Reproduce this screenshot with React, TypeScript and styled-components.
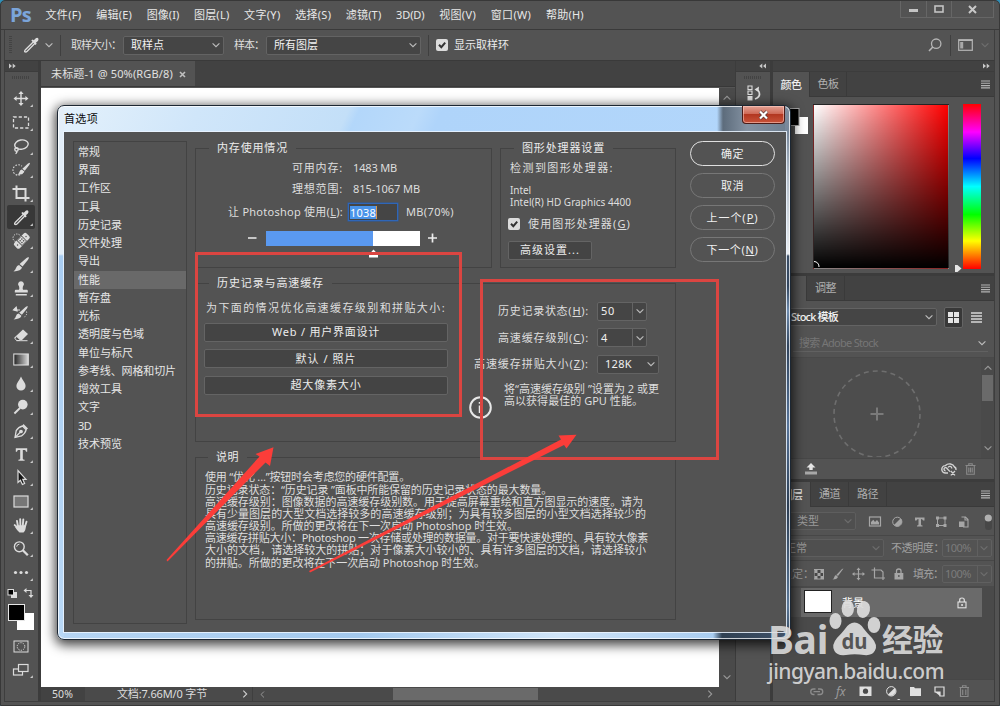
import React, { useLayoutEffect, useRef, useState } from "react";
import styled, { createGlobalStyle, css } from "styled-components";

const GlobalStyle = createGlobalStyle`
  * { box-sizing: border-box; }
  html, body { margin: 0; padding: 0; background: #2f8fb8; overflow: hidden; }
  body {
    font-family: "Noto Sans", "Noto Sans CJK SC", sans-serif;
    font-size: 11px;
    line-height: 14px;
    color: #dedede;
  }
  svg { display: block; flex: none; }
`;

/* ---------- text ---------- */

type TextProps = { $size?: number; $color?: string; $weight?: number; $ml?: number };

const TextSpan = styled.span<TextProps>`
  display: inline-block;
  flex: none;
  white-space: nowrap;
  font-size: ${(p) => p.$size ?? 11}px;
  color: ${(p) => p.$color ?? "inherit"};
  font-weight: ${(p) => p.$weight ?? 400};
  margin-left: ${(p) => p.$ml ?? 0}px;
  u { text-underline-offset: 1px; text-decoration-thickness: 1px; }
`;

/* Tracks its letters so that the run takes exactly the given width. */
function Label({ w, children, ...rest }: TextProps & { w: number; children: React.ReactNode }) {
  const ref = useRef<HTMLSpanElement>(null);
  const [spacing, setSpacing] = useState(0);
  useLayoutEffect(() => {
    const el = ref.current;
    if (!el) return;
    el.style.letterSpacing = "0px";
    const natural = el.getBoundingClientRect().width;
    const count = (el.textContent ?? "").length || 1;
    const next = (w - natural) / count;
    el.style.letterSpacing = `${next}px`;
    setSpacing(next);
  }, [w]);
  return (
    <TextSpan ref={ref} style={{ letterSpacing: spacing }} {...rest}>
      {children}
    </TextSpan>
  );
}

const Gap = styled.div<{ $w: number }>`
  width: ${(p) => p.$w}px;
  flex: none;
`;

/* ---------- window shell ---------- */

const Window = styled.div`
  position: relative;
  width: 1000px;
  height: 706px;
  display: flex;
  flex-direction: column;
  background: #535353;
  border: 1px solid #383838;
  border-top-left-radius: 5px;
  border-top-right-radius: 5px;
  overflow: hidden;
`;

const TitleBar = styled.header`
  height: 29px;
  flex: none;
  display: flex;
  justify-content: space-between;
  border-bottom: 1px solid #3a3a3a;
`;

const Menu = styled.nav`
  display: flex;
  align-items: center;
  padding-left: 9px;
  color: #e8e8e8;
`;

const Logo = styled.div`
  width: 35.5px;
  font: 700 20px/26px "Open Sans", "Noto Sans", sans-serif;
  letter-spacing: -0.8px;
  color: #7ba5da;
`;

const MenuItems = styled.div`
  display: flex;
  gap: 14.65px;
`;

const WindowButtons = styled.div`
  display: flex;
  height: 17px;
  margin-right: 5px;
  border: 1px solid #666;
  border-top: 0;
`;

const WindowButton = styled.div<{ $w: number }>`
  width: ${(p) => p.$w}px;
  display: grid;
  place-items: center;
  & + & { border-left: 1px solid #666; }
`;

const OptionsBar = styled.div`
  height: 31px;
  flex: none;
  margin: 0 4px 0 3px;
  padding: 0 4px;
  border-left: 1px solid #3e3e3e;
  border-right: 1px solid #3e3e3e;
  border-bottom: 1px solid #3a3a3a;
  display: flex;
  align-items: center;
`;

const Grip = styled.div`
  width: 3px;
  height: 18px;
  background: repeating-linear-gradient(#434343 0 1px, #535353 1px 2px);
`;

const Divider = styled.div<{ $ml: number; $mr: number }>`
  width: 1px;
  height: 21px;
  background: #3f3f3f;
  margin: 0 ${(p) => p.$mr}px 0 ${(p) => p.$ml}px;
`;

const Select = styled.div<{ $w: number; $h?: number; $ml?: number; $dim?: boolean; $pl?: number }>`
  width: ${(p) => p.$w}px;
  height: ${(p) => p.$h ?? 19}px;
  margin-left: ${(p) => p.$ml ?? 0}px;
  padding: 0 3px 0 ${(p) => p.$pl ?? 7}px;
  flex: none;
  display: flex;
  align-items: center;
  justify-content: space-between;
  background: ${(p) => (p.$dim ? "#4f4f4f" : "#454545")};
  border: 1px solid ${(p) => (p.$dim ? "#5e5e5e" : "#636363")};
  border-radius: 2px;
`;

const Tick = styled.div`
  width: 12px;
  height: 12px;
  flex: none;
  border-radius: 2px;
  background: #dcdcdc;
  display: grid;
  place-items: center;
`;

const Spacer = styled.div`
  flex: 1;
`;

const Workspace = styled.div`
  flex: 1;
  min-height: 0;
  margin: 0 4px 3px 3px;
  border: solid #3e3e3e;
  border-width: 0 1px 1px 1px;
  display: flex;
  background: #3c3c3c;
`;

/* ---------- tools ---------- */

const ToolColumn = styled.aside`
  width: 33px;
  margin-right: 3px;
  flex: none;
  display: flex;
  flex-direction: column;
`;

const CollapseStrip = styled.div<{ $end?: boolean }>`
  height: 10px;
  flex: none;
  margin-bottom: 1px;
  padding: 0 4px;
  display: flex;
  align-items: center;
  justify-content: ${(p) => (p.$end ? "flex-end" : "flex-start")};
  background: #424242;
`;

const ToolPanel = styled.div`
  flex: 1;
  background: #535353;
  padding: 4px 0 0 2px;
  display: flex;
  flex-direction: column;
`;

const GripRow = styled.div<{ $mb: number }>`
  width: 18px;
  height: 3px;
  margin: 0 0 ${(p) => p.$mb}px 5px;
  background: repeating-linear-gradient(90deg, #434343 0 1px, #535353 1px 2px);
`;

const ToolCell = styled.div<{ $active?: boolean }>`
  width: 28px;
  height: 23.7px;
  display: grid;
  place-items: center;
  ${(p) =>
    p.$active &&
    css`
      background: #383838;
      border-radius: 2px;
    `}
`;

const SwatchArea = styled.div`
  height: 50px;
  padding-top: 2px;
`;

/* ---------- document ---------- */

const DocumentColumn = styled.section`
  width: 694px;
  margin-right: 1px;
  flex: none;
  display: flex;
  flex-direction: column;
  background: #424242;
`;

const TabBar = styled.div`
  height: 26px;
  flex: none;
  display: flex;
  border-bottom: 1px solid #383838;
`;

const DocTab = styled.div`
  width: 154px;
  background: #535353;
  padding: 1px 9px 0 10px;
  display: flex;
  align-items: center;
  justify-content: space-between;
  color: #e0e0e0;
`;

const CanvasRow = styled.div`
  flex: 1;
  display: flex;
  border-top: 1px solid #555;
`;

const Canvas = styled.div`
  width: 678px;
  background: #fff;
`;

const VScroll = styled.div<{ $w: number }>`
  width: ${(p) => p.$w}px;
  background: #4a4a4a;
  display: flex;
  flex-direction: column;
  align-items: center;
  justify-content: space-between;
  padding: 6px 0;
`;

const StatusBar = styled.div`
  height: 14px;
  flex: none;
  display: flex;
  align-items: center;
  background: #4a4a4a;
`;

const ZoomBox = styled.div`
  width: 44px;
  height: 14px;
  padding-left: 11px;
  background: #424242;
`;

const DocInfo = styled.div`
  width: 168px;
  height: 14px;
  padding: 0 3px 0 32px;
  display: flex;
  justify-content: space-between;
  align-items: center;
  border-right: 1px solid #3f3f3f;
`;

const HTrack = styled.div`
  width: 466px;
  height: 14px;
  padding: 0 5px 0 6px;
  display: flex;
  align-items: center;
  justify-content: space-between;
`;

const HThumb = styled.div`
  width: 145px;
  height: 12px;
  margin-left: -41px;
  background: #6a6a6a;
`;

/* ---------- right side ---------- */

const IconDock = styled.aside`
  width: 34px;
  margin-right: 3px;
  flex: none;
  display: flex;
  flex-direction: column;
`;

const IconDockPanel = styled.div`
  flex: 1;
  background: #535353;
  padding: 4px 0 0 3px;
`;

const DockIcon = styled.div`
  display: grid;
  place-items: center;
  width: 31px;
`;

const Panels = styled.aside`
  flex: 1;
  display: flex;
  flex-direction: column;
  min-width: 0;
`;

const Panel = styled.section<{ $h?: number }>`
  ${(p) => (p.$h ? `height: ${p.$h}px; flex: none;` : "flex: 1;")}
  margin-bottom: 3px;
  display: flex;
  flex-direction: column;
  background: #535353;
  &:last-child { margin-bottom: 0; }
`;

const PanelTabs = styled.div`
  height: 25px;
  flex: none;
  display: flex;
  align-items: stretch;
  padding-right: 4px;
  background: #424242;
  border-bottom: 1px solid #3a3a3a;
`;

const PanelTab = styled.div<{ $w: number; $active?: boolean }>`
  width: ${(p) => p.$w}px;
  display: flex;
  align-items: center;
  justify-content: center;
  background: ${(p) => (p.$active ? "#535353" : "transparent")};
  margin-bottom: ${(p) => (p.$active ? -1 : 0)}px;
  border-right: 1px solid #3a3a3a;
  color: ${(p) => (p.$active ? "#f0f0f0" : "#b0b0b0")};
`;

const ColorBody = styled.div`
  display: flex;
  padding: 7px 0 0 14px;
`;

const ColorField = styled.div`
  width: 136px;
  height: 165px;
  background: linear-gradient(to bottom, transparent, #000), linear-gradient(to right, #fff, #f00);
  border: 1px solid rgba(60, 60, 60, 0.6);
  display: flex;
  align-items: flex-end;
`;

const HueBar = styled.div`
  width: 18px;
  height: 165px;
  background: linear-gradient(#f00, #f0f 17%, #00f 33%, #0ff 50%, #0f0 67%, #ff0 83%, #f00);
`;

const HuePointer = styled.div`
  width: 14px;
  display: flex;
  align-items: flex-end;
  padding-left: 6px;
  margin-bottom: -4px;
`;

const LibraryHead = styled.div`
  height: 57px;
  border-bottom: 1px solid #494949;
  padding: 6px 12px 0 0;
`;

const PanelRow = styled.div<{ $h: number; $pl?: number; $line?: boolean }>`
  height: ${(p) => p.$h}px;
  flex: none;
  padding-left: ${(p) => p.$pl ?? 0}px;
  display: flex;
  align-items: center;
  ${(p) => p.$line && "border-bottom: 1px solid #474747;"}
`;

const SearchRow = styled.div`
  height: 19px;
  margin: 6px -6px 0 20px;
  padding: 2px 2px 0 6px;
  display: flex;
  align-items: center;
  justify-content: space-between;
  border-bottom: 1px solid #616161;
`;

const ViewToggle = styled.div`
  width: 20px;
  height: 21px;
  margin: 0 8px 0 7px;
  display: grid;
  place-items: center;
  background: #383838;
  border: 1px solid #646464;
  border-radius: 2px;
`;

const LibraryBody = styled.div`
  flex: 1;
  display: flex;
  background: #4d4d4d;
`;

const DropTarget = styled.div`
  width: 209px;
  padding: 12px 0 0 60px;
  overflow: hidden;
  height: 99px;
`;

const Thumb = styled.div`
  width: 11px;
  height: 26px;
  margin: -40px 0 0;
  background: #6a6a6a;
`;

const NumberBox = styled.div<{ $ml: number }>`
  width: 50px;
  height: 18px;
  margin-left: ${(p) => p.$ml}px;
  display: flex;
  align-items: center;
  justify-content: space-between;
  padding: 0 3px 0 2px;
  border: 1px solid #606060;
  border-radius: 2px;
  color: #7c7c7c;
  background: linear-gradient(to right, transparent 34px, #606060 34px 35px, transparent 35px);
`;

const LayerList = styled.div`
  flex: 1;
  background: #4a4a4a;
  display: flex;
  padding-top: 2px;
`;

const EyeCell = styled.div`
  width: 28px;
  height: 29px;
  background: #535353;
`;

const LayerRow = styled.div`
  width: 181px;
  height: 29px;
  display: flex;
  align-items: center;
  padding: 0 15px 0 4px;
  background: #6a6a6a;
  color: #fff;
`;

const LayerThumb = styled.div`
  width: 28px;
  height: 23px;
  margin: -2px 0 0 -1px;
  background: #fff;
  border: 1px solid #222;
`;

const PanelFooter = styled.div<{ $h: number; $pl: number }>`
  height: ${(p) => p.$h}px;
  flex: none;
  display: flex;
  align-items: center;
  padding-left: ${(p) => p.$pl}px;
  background: #535353;
  border-top: 1px solid #474747;
`;

/* ---------- preferences dialog ---------- */

const DialogFrame = styled.div`
  position: absolute;
  left: 56px;
  top: 104px;
  width: 734px;
  height: 535px;
  padding: 0 4px 7px 6px;
  border: 1px solid #1c2733;
  border-radius: 7px;
  background:
    linear-gradient(to bottom, #7e8c9c, #77879a 26px, #b3bdc9 70px, #e9ecef 148px, #3d4f66 150px, #33465e 180px, #6f8cae 205px, #31445c 240px, #58759a 320px, #2c3d52 400px, #5c7897 500px, #34465b) right 0 top 0 / 5px 100% no-repeat,
    linear-gradient(to right, rgba(93, 108, 124, 0), #5d6c7c 6px, #8492a2 30px, #6f7f90) right 5px top 0 / 68px 27px no-repeat,
    linear-gradient(to bottom, #e3eef8 0 148px, #a9cdf2 150px, #b9d8f6) left 0 top 0 / 6px 100% no-repeat,
    linear-gradient(to right, #b6d5f3, #a3c9ee 300px, #cfe4f8 500px, #a9cdf0 655px, #2f4052 664px, #41536a) 0 100% / 100% 8px no-repeat,
    linear-gradient(115deg, #e4f1fb 0, #d0e6fa 130px, #c3dff8 265px, #b3d7fa 275px, #bbdbfa 330px, #afd4fa 350px, #b5d8fb);
  box-shadow: inset 0 0 0 1px rgba(255, 255, 255, 0.75), 0 3px 12px 2px rgba(0, 0, 0, 0.75);
`;

const DialogTitle = styled.div`
  height: 26px;
  display: flex;
  align-items: flex-start;
  justify-content: space-between;
  color: #0a0a0a;
  line-height: 25px;
`;

const CloseButton = styled.div`
  width: 43px;
  height: 18px;
  margin-right: 1px;
  display: grid;
  place-items: center;
  border: 1px solid #4a1c18;
  border-top: 0;
  border-radius: 0 0 4px 4px;
  background: linear-gradient(#e3a295, #cf6a57 45%, #b23720 50%, #c8533a);
  box-shadow: inset 0 0 0 1px rgba(255, 210, 200, 0.55);
`;

const DialogBody = styled.div`
  width: 722px;
  height: 500px;
  display: flex;
  align-items: flex-start;
  background: #535353;
  box-shadow: 0 0 0 1px rgba(235, 245, 255, 0.85);
`;

const Categories = styled.ul`
  list-style: none;
  width: 114px;
  height: 483px;
  margin: 9px 0 0 9px;
  padding: 1px 0 0;
  border: 1px solid #434343;
  color: #e6e6e6;
`;

const Category = styled.li<{ $active?: boolean }>`
  height: 18.24px;
  padding-left: 4px;
  line-height: 18px;
  background: ${(p) => (p.$active ? "#696969" : "transparent")};
`;

const Groups = styled.div`
  width: 481px;
  margin: 7px 0 0 8px;
  display: flex;
  flex-direction: column;
  gap: 6px;
`;

const GroupRow = styled.div`
  display: flex;
  gap: 8px;
`;

const Group = styled.fieldset<{ $w: number; $h: number }>`
  width: ${(p) => p.$w}px;
  height: ${(p) => p.$h}px;
  min-width: 0;
  margin: 0;
  padding: 0;
  border: 1px solid #434343;
`;

const Legend = styled.legend<{ $ml?: number }>`
  height: 18px;
  line-height: 18px;
  margin-left: ${(p) => p.$ml ?? 13}px;
  padding: 0 8px;
  color: #ececec;
`;

const FormRow = styled.div<{ $mt: number; $h?: number; $pl?: number }>`
  height: ${(p) => p.$h ?? 20}px;
  margin-top: ${(p) => p.$mt}px;
  padding-left: ${(p) => p.$pl ?? 0}px;
  display: flex;
  align-items: center;
`;

const FieldName = styled.div<{ $w: number }>`
  width: ${(p) => p.$w}px;
  display: flex;
  justify-content: flex-end;
`;

const MemoryInput = styled.div`
  width: 50px;
  height: 18px;
  margin: 0 8px 0 5px;
  padding: 1px 1px;
  background: #454545;
  border: 1px solid #2f66b8;
  box-shadow: 0 0 0 0.5px #2b5da3;
`;

const Selection = styled.div`
  width: 27px;
  height: 13px;
  line-height: 13px;
  margin-top: 1px;
  background: #4a94ea;
  color: #fff;
  border-right: 1px solid #d79a52;
`;

const Meter = styled.div`
  width: 154px;
  height: 15px;
  margin: 0 8px 0 9px;
  background: #fff;
`;

const MeterFill = styled.div`
  width: 107px;
  height: 15px;
  background: #5a99f0;
`;

const PushButton = styled.div<{ $w: number }>`
  width: ${(p) => p.$w}px;
  height: 19px;
  display: flex;
  align-items: center;
  justify-content: center;
  background: #444;
  border: 1px solid #646464;
  border-radius: 2px;
  color: #ededed;
`;

const HistoryColumns = styled.div`
  display: flex;
`;

const PresetColumn = styled.div`
  width: 244px;
  margin: 8px 21px 0 8px;
  display: flex;
  flex-direction: column;
  gap: 7.5px;
`;

const PresetHint = styled.div`
  height: 16px;
  line-height: 16px;
  padding-left: 2px;
  margin-bottom: -1px;
`;

const Combo = styled.div`
  width: 50px;
  height: 19px;
  margin-left: 8px;
  padding: 0 2px 0 3px;
  display: flex;
  align-items: center;
  justify-content: space-between;
  border: 1px solid #646464;
  border-radius: 2px;
  background: linear-gradient(to right, #454545 34px, #646464 34px 35px, #454545 35px);
  color: #f0f0f0;
`;

const Note = styled.div`
  display: flex;
  gap: 12px;
  margin-top: 8.5px;
`;

const InfoBadge = styled.div`
  padding-top: 13px;
`;

const Lines = styled.div<{ $pt?: number; $pl?: number }>`
  padding: ${(p) => p.$pt ?? 0}px 0 0 ${(p) => p.$pl ?? 0}px;
`;

const Line = styled.div`
  height: 12.18px;
  line-height: 12.18px;
`;

const ActionColumn = styled.div`
  width: 85px;
  margin: 9px 0 0 14px;
  display: flex;
  flex-direction: column;
  gap: 7px;
`;

const PillButton = styled.div<{ $primary?: boolean }>`
  height: 25px;
  display: flex;
  align-items: center;
  justify-content: center;
  border: 1px solid ${(p) => (p.$primary ? "#e0e0e0" : "#777")};
  border-radius: 13px;
  color: #f0f0f0;
`;

/* ---------- overlays ---------- */

const Highlight = styled.div<{ $x: number; $y: number; $w: number; $h: number }>`
  position: absolute;
  left: ${(p) => p.$x - 1}px;
  top: ${(p) => p.$y - 1}px;
  width: ${(p) => p.$w}px;
  height: ${(p) => p.$h}px;
  border: 3px solid #db4541;
`;

const ArrowLayer = styled.svg`
  position: absolute;
  left: -1px;
  top: -1px;
`;

const Watermark = styled.div`
  position: absolute;
  left: 767px;
  top: 596px;
  width: 180px;
  color: rgba(222, 222, 222, 0.9);
`;

const WatermarkTop = styled.div`
  height: 60px;
  display: flex;
  align-items: flex-end;
  line-height: 36px;
`;

const WatermarkUrl = styled.div`
  line-height: 24px;
  margin-top: 2px;
`;

/* ---------- icons ---------- */

const INK = "#dcdcdc";

const Chevron = ({ c = "#bdbdbd", r = 0, s = 8 }: { c?: string; r?: number; s?: number }) => (
  <svg width={s} height={s} viewBox="-4 -4 8 8">
    <path d="M-3.4 -1.7L0 1.7L3.4 -1.7" transform={`rotate(${r})`} fill="none" stroke={c} strokeWidth="1.1" />
  </svg>
);

const DoubleArrow = ({ flip = false }: { flip?: boolean }) => (
  <svg width="7" height="6" viewBox="0 0 7 6">
    <path d="M0 .5L3 3L0 5.500zM3.700 .5L6.700 3L3.700 5.500z" fill="#c8c8c8" transform={flip ? "translate(7 0) scale(-1 1)" : undefined} />
  </svg>
);

const PanelMenu = () => (
  <svg width="9" height="9" viewBox="0 0 9 9">
    <path d="M0 1H9M0 3.300H9M0 5.600H9M0 7.900H9" stroke="#b4b4b4" strokeWidth="1.1" />
  </svg>
);

const Check = () => (
  <svg width="10" height="10" viewBox="0 0 10 10">
    <path d="M2 4.800L4.300 7.200L8.200 2.600" fill="none" stroke="#333" strokeWidth="2" />
  </svg>
);

const Dropper = (
  <g>
    <path d="M2.500 -3.200L-5.600 4.700Q-7 6.400 -6 6.800Q-5 7.400 -3.800 6.200L4 -1.700" fill="none" stroke={INK} strokeWidth="1.3" />
    <path d="M.3 -4.600L1.700 -5.600L2.800 -4.700L4.800 -6.800Q6.500 -7.600 7.300 -6.500Q7.900 -5 6.900 -4.100L4.900 -2.300L5.700 -1.200L4.500 -.1z" fill={INK} />
  </g>
);

const BrushShape = (
  <g fill={INK}>
    <path d="M7.500 -7.500Q8.500 -7 7 -4.800L1.500 2L-1.400 -.4L5.500 -6.600z" />
    <path d="M-2 .5L1 3Q.3 6.500 -7.500 7Q-5.400 5.600 -5 3.600Q-4.300 .8 -2 .5z" />
  </g>
);

const toolGlyphs: React.ReactNode[] = [
  <g key="move" fill="none" stroke={INK} strokeWidth="1.4">
    <path d="M0 -6V6M-6 0H6" />
    <path d="M0 -7.500L-2.600 -4.400H2.600zM0 7.500L-2.600 4.400H2.600zM-7.500 0L-4.400 -2.600V2.600zM7.500 0L4.400 -2.600V2.600z" fill={INK} stroke="none" />
  </g>,
  <rect key="marquee" x="-7.500" y="-5.500" width="15" height="11" fill="none" stroke={INK} strokeWidth="1.3" strokeDasharray="3.2 2" />,
  <g key="lasso" fill="none" stroke={INK} strokeWidth="1.4">
    <ellipse cx=".8" cy="-1.800" rx="6.800" ry="4.600" transform="rotate(-10)" />
    <circle cx="-4.500" cy="3" r="1.700" />
    <path d="M-4.500 4.500Q-3.500 6.200 -5.500 7.200" />
  </g>,
  <g key="quick">
    <circle cx="-2.800" cy=".5" r="5.200" fill="none" stroke={INK} strokeWidth="1.1" strokeDasharray="1.6 1.4" />
    <circle cx="4" cy="0" r="4.500" fill="#535353" />
    <g transform="translate(2.500 -.5) scale(.82)">{BrushShape}</g>
  </g>,
  <path key="crop" d="M-8.500 -4.500H4.500V8M-4.500 -8V4.500H8.500" fill="none" stroke={INK} strokeWidth="2" />,
  <g key="eyedropper">{Dropper}</g>,
  <g key="heal">
    <circle cx="-4" cy="-2.500" r="4" fill="none" stroke={INK} strokeWidth="1" strokeDasharray="1.3 1.2" />
    <g transform="translate(.8 .3) rotate(-45)">
      <rect x="-8.600" y="-3.800" width="17.200" height="7.600" rx="2" fill={INK} />
      <rect x="-3.600" y="-3.800" width="7.200" height="7.600" fill="#535353" />
      <rect x="-2.800" y="-3.200" width="5.600" height="6.400" fill={INK} />
      <g fill="#535353">
        <circle cx="-1.100" cy="-1.200" r=".8" /><circle cx="1.300" cy="-1.200" r=".8" />
        <circle cx="-1.100" cy="1.300" r=".8" /><circle cx="1.300" cy="1.300" r=".8" />
        <circle cx="-6" cy="0" r=".7" /><circle cx="6" cy="0" r=".7" />
      </g>
    </g>
  </g>,
  <g key="brush">{BrushShape}</g>,
  <path key="stamp" d="M0 -7.200A2.900 2.900 0 0 1 2 -2.200Q1.300 0 2 1.200H5.800Q6.800 1.200 6.800 2.500V4H-6.200V2.500Q-6.200 1.200 -5.200 1.200H-2Q-1.300 0 -2 -2.200A2.900 2.900 0 0 1 0 -7.200zM-5.200 5.400H5.800V6.900H-5.200z" fill={INK} />,
  <g key="history-brush">
    <g transform="translate(-.5 .5) scale(.92)">{BrushShape}</g>
    <path d="M-7 -2.500H-1M-7.500 -2.500L-4.800 -5.300L-4 -1.600z" fill={INK} stroke={INK} strokeWidth="1.2" />
    <path d="M5.500 -1Q6.500 3 2.500 5" fill="none" stroke={INK} strokeDasharray="1.200 1.200" />
  </g>,
  <g key="eraser">
    <path d="M2 -6L7 -1.500L1 4.500H-4.500L-6.800 2.200z" fill={INK} />
    <path d="M-4.500 .8L-.8 4.300L-1.800 5H-4.400L-6 3z" fill="#535353" stroke={INK} strokeWidth="1" />
    <path d="M-4.500 5.200H6.500" stroke={INK} strokeWidth="1" />
  </g>,
  <g key="gradient">
    <rect x="-7.200" y="-5.500" width="14.500" height="11" fill="url(#grayRamp)" stroke={INK} strokeWidth="1.100" />
  </g>,
  <path key="blur" d="M0 -7Q1 -4.500 3 -1.800Q4.800 .8 4.600 2.600A4.600 4.400 0 0 1 -4.600 2.600Q-4.800 .8 -3 -1.800Q-1 -4.500 0 -7z" fill={INK} />,
  <g key="dodge">
    <circle cx="1.800" cy="-1.900" r="4.800" fill={INK} />
    <path d="M-1 1.500L-6.600 7" stroke={INK} strokeWidth="1.900" />
  </g>,
  <g key="pen" fill="none" stroke={INK} strokeWidth="1.300">
    <path d="M-6 7L-4.800 .2Q-2.500 -3.500 1.500 -4.500L5.200 -.8Q4.200 3.200 .5 5.500z" />
    <path d="M-6 7L-.5 1.500" />
    <circle cx="0" cy="1" r="1.200" fill={INK} />
    <path d="M2.500 -6.500L7 -2L5.500 -.8L1.500 -5z" fill={INK} stroke="none" />
  </g>,
  <path key="type" d="M-5.200 -6.200H6.200V-2.800H5Q4.800 -4.600 3.800 -4.600H1.800V4.200Q1.800 5.200 3.600 5.300V6.300H-2.600V5.300Q-.8 5.200 -.8 4.200V-4.600H-2.800Q-3.800 -4.600 -4 -2.800H-5.200z" fill={INK} />,
  <path key="path-select" d="M-3 -7L-3 5L-.6 2.800L1.400 7L3.600 6L1.800 1.900H5z" fill="#151515" stroke={INK} strokeWidth="1.200" />,
  <rect key="shape" x="-7" y="-5.500" width="14" height="11" fill="#777" stroke={INK} strokeWidth="1.200" />,
  <g key="hand" fill="none" stroke={INK} strokeLinecap="round">
    <path d="M-3 1L-4 -4.600M-.6 0L-.8 -6.300M1.800 0L2.300 -6M4 1L5.500 -3.800" strokeWidth="1.900" />
    <path d="M-3.500 2L-6.300 -.4" strokeWidth="1.900" />
    <path d="M-4 -.2H4.800Q5 5 2.500 7H-1.500Q-4 5 -6 1.500L-3.800 1.500z" fill={INK} stroke="none" />
  </g>,
  <g key="zoom" fill="none" stroke={INK}>
    <circle cx="-1.700" cy="-1.700" r="4.900" strokeWidth="1.400" />
    <path d="M1.800 1.800L6.800 6.800" strokeWidth="2.300" />
    <path d="M-4.300 -1.800A2.700 2.700 0 0 1 -1.600 -4.300" strokeWidth="1" />
  </g>,
  <g key="more" fill={INK}>
    <circle cx="-5.500" cy="0" r="1.600" /><circle cx="0" cy="0" r="1.600" /><circle cx="5.500" cy="0" r="1.600" />
  </g>,
];

const Tool = ({ children, corner = true }: { children: React.ReactNode; corner?: boolean }) => (
  <svg width="28" height="23" viewBox="-14 -11.500 28 23">
    {children}
    {corner && <path d="M11.800 5.700V8.400H9.100z" fill="#cfcfcf" />}
  </svg>
);

const Trash = ({ c = "#8a8a8a" }: { c?: string }) => (
  <svg width="11" height="12" viewBox="0 0 11 12">
    <path d="M.5 2.500H10.500M3.800 2.200V.8H7.200V2.200M1.700 2.800V11.200H9.300V2.800M3.800 4.500V9.500M5.500 4.500V9.500M7.200 4.500V9.500" fill="none" stroke={c} strokeWidth="1.100" />
  </svg>
);

const Padlock = ({ c }: { c: string }) => (
  <svg width="10" height="12" viewBox="0 0 10 12">
    <path d="M2.700 5V3Q2.700 1 5 1Q7.300 1 7.300 3V5" fill="none" stroke={c} strokeWidth="1.200" />
    <rect x="1" y="5" width="8" height="5.800" fill="none" stroke={c} strokeWidth="1.100" />
    <rect x="4.300" y="7" width="1.500" height="2" fill={c} />
  </svg>
);

/* ---------- sections ---------- */

const menuItems: [string, number][] = [
  ["文件(F)", 36], ["编辑(E)", 36], ["图像(I)", 32.5], ["图层(L)", 35.5], ["文字(Y)", 36.5], ["选择(S)", 36],
  ["滤镜(T)", 35.5], ["3D(D)", 28.5], ["视图(V)", 37], ["窗口(W)", 40.5], ["帮助(H)", 38],
];

function Header() {
  return (
    <TitleBar>
      <Menu>
        <Logo>Ps</Logo>
        <MenuItems>
          {menuItems.map(([t, w]) => (
            <Label key={t} w={w}>{t}</Label>
          ))}
        </MenuItems>
      </Menu>
      <WindowButtons>
        <WindowButton $w={25}>
          <svg width="9" height="8"><rect x="0" y="4" width="9" height="3" fill="#c4c4c4" /></svg>
        </WindowButton>
        <WindowButton $w={25}>
          <svg width="10" height="8"><rect x="1" y="1" width="8" height="6" fill="none" stroke="#c4c4c4" strokeWidth="1.600" /></svg>
        </WindowButton>
        <WindowButton $w={42}>
          <svg width="9" height="9"><path d="M1 1L8 8M8 1L1 8" stroke="#c8c8c8" strokeWidth="2" /></svg>
        </WindowButton>
      </WindowButtons>
    </TitleBar>
  );
}

function ToolOptions() {
  return (
    <OptionsBar>
      <Grip />
      <Gap $w={10} />
      <svg width="18" height="18" viewBox="-9 -9 18 18">{Dropper}</svg>
      <Gap $w={5} />
      <Chevron />
      <Divider $ml={7} $mr={10} />
      <Label w={50}>取样大小：</Label>
      <Select $w={101} $ml={2}>
        <Label w={33} $color="#f2f2f2">取样点</Label>
        <Chevron />
      </Select>
      <Label w={30} $ml={10}>样本：</Label>
      <Select $w={155} $ml={2}>
        <Label w={44} $color="#f2f2f2">所有图层</Label>
        <Chevron />
      </Select>
      <Divider $ml={7} $mr={7} />
      <Tick><Check /></Tick>
      <Label w={55} $ml={6} $color="#ececec">显示取样环</Label>
      <Spacer />
      <svg width="14" height="14" viewBox="0 0 14 14">
        <circle cx="8.200" cy="5.700" r="4.700" fill="none" stroke="#b4b4b4" strokeWidth="1.300" />
        <path d="M4.800 9L1 13" stroke="#b4b4b4" strokeWidth="1.600" />
      </svg>
      <Divider $ml={8} $mr={7} />
      <svg width="15" height="12" viewBox="0 0 15 12">
        <rect x=".7" y=".7" width="13.600" height="10.600" fill="none" stroke="#b4b4b4" strokeWidth="1.200" />
        <rect x="2.200" y="3" width="3" height="6.500" fill="#a8a8a8" />
        <path d="M1 1.500H14" stroke="#b4b4b4" />
      </svg>
      <Gap $w={8} />
      <Chevron c="#6e6e6e" />
      <Gap $w={1} />
    </OptionsBar>
  );
}

function Toolbox() {
  return (
    <ToolColumn>
      <CollapseStrip><DoubleArrow /></CollapseStrip>
      <ToolPanel>
        <GripRow $mb={8} />
        {toolGlyphs.map((g, i) => (
          <ToolCell key={i} $active={i === 5}><Tool>{g}</Tool></ToolCell>
        ))}
        <SwatchArea>
          <svg width="30" height="46" viewBox="7 587 30 46">
            <rect x="11.500" y="593.500" width="5" height="5" fill={INK} stroke={INK} />
            <rect x="8" y="590.500" width="5.500" height="5.500" fill="#000" stroke={INK} />
            <path d="M26 591.500H31V597" fill="none" stroke={INK} strokeWidth="1.200" />
            <path d="M23.500 591.500L26.500 589V594zM31 599L28.500 596H33.500z" fill={INK} />
            <rect x="17" y="614" width="17" height="17" fill="#fff" />
            <rect x="8.500" y="605.500" width="16" height="16" fill="#000" stroke="#e6e6e6" />
          </svg>
        </SwatchArea>
        <ToolCell>
          <Tool corner={false}>
            <rect x="-7" y="-5.500" width="14" height="11" fill="none" stroke={INK} />
            <circle r="3.800" fill="none" stroke={INK} strokeDasharray="1.300 1.100" />
          </Tool>
        </ToolCell>
        <ToolCell>
          <Tool>
            <rect x="-7.500" y="-.5" width="9" height="6" fill="none" stroke={INK} strokeWidth="1.200" />
            <rect x="-2.500" y="-5" width="9.500" height="7" fill="#535353" stroke={INK} strokeWidth="1.200" />
          </Tool>
        </ToolCell>
      </ToolPanel>
    </ToolColumn>
  );
}

function DocumentArea() {
  return (
    <DocumentColumn>
      <TabBar>
        <DocTab>
          <Label w={122}>未标题-1 @ 50%(RGB/8)</Label>
          <svg width="7" height="7"><path d="M1 1L6 6M6 1L1 6" stroke="#c0c0c0" strokeWidth="1.600" /></svg>
        </DocTab>
      </TabBar>
      <CanvasRow>
        <Canvas />
        <VScroll $w={16}><Chevron r={180} c="#999" /><Chevron c="#999" /></VScroll>
      </CanvasRow>
      <StatusBar>
        <ZoomBox><Label w={21} $size={10.5}>50%</Label></ZoomBox>
        <DocInfo>
          <Label w={90}>文档:7.66M/0 字节</Label>
          <Chevron r={-90} c="#d0d0d0" />
        </DocInfo>
        <HTrack><Chevron r={90} s={7} c="#999" /><HThumb /><Chevron r={-90} c="#999" /></HTrack>
      </StatusBar>
    </DocumentColumn>
  );
}

function ColorPanel() {
  return (
    <Panel $h={201}>
      <PanelTabs>
        <PanelTab $w={37} $active><Label w={21} $weight={500}>颜色</Label></PanelTab>
        <PanelTab $w={37}><Label w={21}>色板</Label></PanelTab>
        <Spacer />
        <PanelRow $h={25}><PanelMenu /></PanelRow>
      </PanelTabs>
      <ColorBody>
        <svg width="26" height="34" viewBox="787 103 26 34">
          <rect x="795" y="116" width="13" height="17" fill="#fff" />
          <rect x="782" y="107.500" width="17" height="17" fill="#000" stroke="#a8a8a8" />
        </svg>
        <ColorField>
          <svg width="8" height="8"><path d="M0 1.500A5 5 0 0 1 5 7" fill="none" stroke="#fff" /></svg>
        </ColorField>
        <HuePointer>
          <svg width="7" height="9"><path d="M0 1H2.500L6.500 4.500L2.500 8H0z" fill="#e6e6e6" /></svg>
        </HuePointer>
        <HueBar />
      </ColorBody>
    </Panel>
  );
}

function LibraryPanel() {
  return (
    <Panel $h={203}>
      <PanelTabs>
        <PanelTab $w={34} $active />
        <PanelTab $w={38}><Label w={21}>调整</Label></PanelTab>
        <Spacer />
        <PanelRow $h={25}><PanelMenu /></PanelRow>
      </PanelTabs>
      <LibraryHead>
        <PanelRow $h={20}>
          <Select $w={164} $h={18} $pl={0}>
            <Label w={79} $color="#f4f4f4" $weight={500} $ml={-15}>Adobe Stock 模板</Label>
            <Chevron />
          </Select>
          <ViewToggle>
            <svg width="11" height="11"><path d="M0 0H5V5H0zM6 0H11V5H6zM0 6H5V11H0zM6 6H11V11H6z" fill="#e4e4e4" /></svg>
          </ViewToggle>
          <svg width="11" height="11"><path d="M0 1H11M0 4H11M0 7H11M0 10H11" stroke="#d8d8d8" strokeWidth="1.700" /></svg>
        </PanelRow>
        <SearchRow>
          <Label w={79} $color="#767676">搜索 Adobe Stock</Label>
          <Chevron />
        </SearchRow>
      </LibraryHead>
      <LibraryBody>
        <DropTarget>
          <svg width="88" height="88" viewBox="-44 -44 88 88">
            <circle r="43" fill="none" stroke="#6e6e6e" strokeWidth="1.600" strokeDasharray="5 4" />
            <path d="M0 -6.500V6.500M-6.500 0H6.500" stroke="#7a7a7a" strokeWidth="2" />
          </svg>
        </DropTarget>
        <VScroll $w={13}><Chevron r={180} c="#999" /><Thumb /><Chevron c="#999" /></VScroll>
      </LibraryBody>
      <PanelFooter $h={21} $pl={32}>
        <svg width="12" height="12">
          <path d="M6 0L10.500 4.500H7.700V7H4.300V4.500H1.500z" fill="#e4e4e4" />
          <rect x="0" y="8.500" width="12" height="3" fill="#a8a8a8" />
        </svg>
        <Gap $w={124} />
        <svg width="16" height="13" viewBox="0 0 16 13">
          <path d="M7 10H4.500A3.700 3.700 0 0 1 4.500 2.600Q6.500 .5 9.500 1Q12.500 1.500 13.500 4Q15.500 5 14.800 7" fill="none" stroke="#d4d4d4" strokeWidth="1.400" />
          <path d="M4.600 7.800A1.600 1.600 0 1 1 6 5.500L9 8.600M7 4.500A2 2 0 0 1 10.800 5.500M9.800 8L14 12.400M14 8L9.800 12.400" fill="none" stroke="#d4d4d4" strokeWidth="1.300" />
        </svg>
        <Gap $w={8} />
        <Trash />
      </PanelFooter>
    </Panel>
  );
}

function LayersPanel() {
  const g = "#a6a6a6";
  return (
    <Panel>
      <PanelTabs>
        <PanelTab $w={38} $active><Label w={21} $ml={1}>图层</Label></PanelTab>
        <PanelTab $w={38}><Label w={21}>通道</Label></PanelTab>
        <PanelTab $w={38}><Label w={21}>路径</Label></PanelTab>
        <Spacer />
        <PanelRow $h={25}><PanelMenu /></PanelRow>
      </PanelTabs>
      <PanelRow $h={29} $line $pl={2}>
        <Select $w={81} $h={18} $dim $pl={21}>
          <Label w={22} $color="#9a9a9a">类型</Label>
          <Chevron c="#6e6e6e" />
        </Select>
        <Gap $w={12} />
        <svg width="124" height="18" viewBox="868 513 124 18">
          <rect x="869.500" y="518" width="11" height="9" fill="none" stroke={g} strokeWidth="1.200" />
          <path d="M871 525.500V523L873.300 520.800L875 523L877 521L879 523.500V525.500z" fill={g} />
          <circle cx="897.300" cy="522.800" r="4.600" fill="none" stroke={g} />
          <path d="M900.500 519.500A4.600 4.600 0 0 1 894 526z" fill={g} />
          <path d="M915 518.500H924.500V521.500H923Q922.800 520 921 520V525.500Q921 526.300 922.500 526.500V527.500H917V526.500Q918.500 526.300 918.500 525.500V520Q916.700 520 916.500 521.500H915z" fill={g} />
          <rect x="937.500" y="519" width="7.500" height="7.500" fill="none" stroke={g} />
          <path d="M936 517.500H939V520.500H936zM943.500 517.500H946.500V520.500H943.500zM936 525H939V528H936zM943.500 525H946.500V528H943.500z" fill={g} />
          <path d="M961.500 518H965.500L968 520.500V528H963M965 518V521H968" fill="none" stroke={g} strokeWidth="1.100" />
          <rect x="959" y="522.500" width="5.500" height="5.500" fill={g} />
          <rect x="985" y="515" width="7" height="16" rx="3.500" fill="#474747" />
          <circle cx="988.300" cy="519" r="3.600" fill="#b0b0b0" />
        </svg>
      </PanelRow>
      <PanelRow $h={25} $line $pl={2}>
        <Select $w={109} $h={18} $dim $pl={9}>
          <Label w={22} $color="#9a9a9a">正常</Label>
          <Chevron c="#6e6e6e" />
        </Select>
        <Label w={53} $ml={7} $color="#a0a0a0">不透明度：</Label>
        <NumberBox $ml={-2}><Label w={26}>100%</Label><Chevron c="#6e6e6e" /></NumberBox>
      </PanelRow>
      <PanelRow $h={25} $pl={8}>
        <Label w={33} $color="#9a9a9a">锁定：</Label>
        <Gap $w={-4} />
        <svg width="93" height="16" viewBox="814 565 93 16">
          <g transform="translate(.500 0)">
            <rect x="813.500" y="568.500" width="9.500" height="9.500" fill="#474747" stroke={g} />
            <path d="M814 569H817V572H814zM820 569H823V572H820zM817 572H820V575H817zM814 575H817V578H814zM820 575H823V578H820z" fill={g} />
          </g>
          <path d="M843.500 567.500L838 575L836.500 573.700L842 568zM836 574L838 576Q837 578.500 832.500 578.500Q834 577.500 834.300 576Q834.700 574.300 836 574z" fill={g} />
          <path d="M858.500 568V578M853.500 573H863.500" stroke={g} strokeWidth="1.200" />
          <path d="M858.500 566.500L860.500 569H856.500zM858.500 579.500L860.500 577H856.500zM852 573L854.500 571V575zM865 573L862.500 571V575z" fill={g} />
          <path d="M874.500 566.500V577H882.500M871.500 569H881L883 571V579M885 577H882.500" fill="none" stroke={g} strokeWidth="1.200" />
          <path d="M896.500 572V570Q896.500 568 898.800 568Q901 568 901 570V572" fill="none" stroke={g} strokeWidth="1.300" />
          <rect x="894.500" y="572" width="8.800" height="6.500" fill={g} />
          <rect x="898.200" y="574" width="1.300" height="2" fill="#535353" />
        </svg>
        <Label w={30} $ml={6} $color="#a0a0a0">填充：</Label>
        <NumberBox $ml={-1}><Label w={26}>100%</Label><Chevron c="#6e6e6e" /></NumberBox>
      </PanelRow>
      <LayerList>
        <EyeCell />
        <LayerRow>
          <LayerThumb />
          <Label w={22} $ml={10}>背景</Label>
          <Spacer />
          <Padlock c="#e2e2e2" />
        </LayerRow>
      </LayerList>
      <PanelFooter $h={22} $pl={37}>
        <svg width="160" height="18" viewBox="810 681 160 18">
          <path d="M814.500 693.500H813.500A2.700 2.700 0 0 1 813.500 688H815.500M818 688H820A2.700 2.700 0 0 1 820 693.500H817.500M813.500 690.700H820" fill="none" stroke="#8c8c8c" strokeWidth="1.300" />
          <text x="836" y="694.500" fontFamily="Noto Sans" fontStyle="italic" fontSize="12" fill="#9a9a9a">fx</text>
          <rect x="859.500" y="685.500" width="12" height="9.500" fill="#e0e0e0" />
          <circle cx="865.500" cy="690.200" r="2.600" fill="#4a4a4a" />
          <circle cx="891.300" cy="690.300" r="4.700" fill="none" stroke="#e0e0e0" />
          <path d="M894.600 687A4.700 4.700 0 0 1 888 693.600z" fill="#e0e0e0" />
          <path d="M900.500 698H897L898.700 699.500z" fill="#e0e0e0" />
          <path d="M910 686H914L915 687.300H921V695H910z" fill="#e0e0e0" />
          <path d="M935 686H944V695H940V691H935z" fill="none" stroke="#e0e0e0" strokeWidth="1.200" />
          <path d="M935 691L940 695V691z" fill="#e0e0e0" />
          <path d="M959.500 686.500H969M962.500 686V684.800H966V686M960.500 687V695.500H968V687M962.700 688.500V694M965.800 688.500V694" fill="none" stroke="#8a8a8a" strokeWidth="1.100" />
        </svg>
      </PanelFooter>
    </Panel>
  );
}

const categories: [string, number][] = [
  ["常规", 22], ["界面", 22], ["工作区", 33], ["工具", 22], ["历史记录", 44], ["文件处理", 44], ["导出", 22],
  ["性能", 22], ["暂存盘", 33], ["光标", 22], ["透明度与色域", 66], ["单位与标尺", 55], ["参考线、网格和切片", 98],
  ["增效工具", 44], ["文字", 22], ["3D", 13], ["技术预览", 44],
];

const description: [string, number][] = [
  ["使用 “优化 ...”按钮时会考虑您的硬件配置。", 205],
  ["历史记录状态：“历史记录 ”面板中所能保留的历史记录状态的最大数量。", 347],
  ["高速缓存级别：图像数据的高速缓存级别数。用于提高屏幕重绘和直方图显示的速度。请为", 438],
  ["具有少量图层的大型文档选择较多的高速缓存级别；为具有较多图层的小型文档选择较少的", 441],
  ["高速缓存级别。所做的更改将在下一次启动 Photoshop 时生效。", 313],
  ["高速缓存拼贴大小：Photoshop 一次存储或处理的数据量。对于要快速处理的、具有较大像素", 443],
  ["大小的文档，请选择较大的拼贴；对于像素大小较小的、具有许多图层的文档，请选择较小", 441],
  ["的拼贴。所做的更改将在下一次启动 Photoshop 时生效。", 280],
];

function MemoryGroup() {
  return (
    <Group $w={297} $h={129}>
      <Legend><Label w={71}>内存使用情况</Label></Legend>
      <FormRow $mt={1}>
        <FieldName $w={147}><Label w={51}>可用内存:</Label></FieldName>
        <Label w={44} $ml={10}>1483 MB</Label>
      </FormRow>
      <FormRow $mt={1}>
        <FieldName $w={147}><Label w={51}>理想范围:</Label></FieldName>
        <Label w={67} $ml={10}>815-1067 MB</Label>
      </FormRow>
      <FormRow $mt={3}>
        <FieldName $w={147}><Label w={115}>让 Photoshop 使用(<u>L</u>):</Label></FieldName>
        <MemoryInput><Selection><Label w={26}>1038</Label></Selection></MemoryInput>
        <Label w={48}>MB(70%)</Label>
      </FormRow>
      <FormRow $mt={6} $pl={52}>
        <svg width="9" height="10"><path d="M0 5H8.500" stroke="#ececec" strokeWidth="1.700" /></svg>
        <Meter><MeterFill /></Meter>
        <svg width="9" height="10"><path d="M0 5H9M4.500 .5V9.500" stroke="#ececec" strokeWidth="1.700" /></svg>
      </FormRow>
      <FormRow $mt={0} $h={10} $pl={173}>
        <svg width="9" height="9"><path d="M4.500 .5L9 5.500V8.500H0V5.500z" fill="#fff" /></svg>
      </FormRow>
    </Group>
  );
}

function GpuGroup() {
  return (
    <Group $w={176} $h={129}>
      <Legend><Label w={83}>图形处理器设置</Label></Legend>
      <FormRow $mt={1} $pl={9}><Label w={104}>检测到图形处理器:</Label></FormRow>
      <FormRow $mt={6} $h={12} $pl={9}><Label w={21} $size={10}>Intel</Label></FormRow>
      <FormRow $mt={0} $h={12} $pl={9}><Label w={121} $size={10}>Intel(R) HD Graphics 4400</Label></FormRow>
      <FormRow $mt={6} $pl={7}>
        <Tick><Check /></Tick>
        <Label w={103} $ml={8}>使用图形处理器(<u>G</u>)</Label>
      </FormRow>
      <FormRow $mt={6} $pl={7}><PushButton $w={84}><Label w={60}>高级设置...</Label></PushButton></FormRow>
    </Group>
  );
}

function HistoryGroup() {
  return (
    <Group $w={481} $h={168}>
      <Legend><Label w={107}>历史记录与高速缓存</Label></Legend>
      <HistoryColumns>
        <PresetColumn>
          <PresetHint><Label w={240}>为下面的情况优化高速缓存级别和拼贴大小:</Label></PresetHint>
          <PushButton $w={244}><Label w={108}>Web / 用户界面设计</Label></PushButton>
          <PushButton $w={244}><Label w={61}>默认 / 照片</Label></PushButton>
          <PushButton $w={244}><Label w={71}>超大像素大小</Label></PushButton>
        </PresetColumn>
        <div>
          <FormRow $mt={9}>
            <FieldName $w={120}><Label w={91}>历史记录状态(<u>H</u>):</Label></FieldName>
            <Combo><Label w={14}>50</Label><Chevron /></Combo>
          </FormRow>
          <FormRow $mt={6.5}>
            <FieldName $w={120}><Label w={91}>高速缓存级别(<u>C</u>):</Label></FieldName>
            <Combo><Label w={7}>4</Label><Chevron /></Combo>
          </FormRow>
          <FormRow $mt={6.5}>
            <FieldName $w={120}><Label w={115}>高速缓存拼贴大小(<u>Z</u>):</Label></FieldName>
            <Select $w={62} $ml={8}><Label w={27} $color="#f0f0f0">128K</Label><Chevron /></Select>
          </FormRow>
          <Note>
            <InfoBadge>
              <svg width="23" height="23" viewBox="0 0 23 23">
                <circle cx="11.500" cy="11.500" r="10.300" fill="none" stroke="#e8e8e8" strokeWidth="2" />
                <path d="M10.400 6V7.800M10.400 9.500V17" stroke="#e8e8e8" strokeWidth="1.300" />
              </svg>
            </InfoBadge>
            <Lines>
              <Line><Label w={155}>将“高速缓存级别 ”设置为  2 或更</Label></Line>
              <Line><Label w={139}>高以获得最佳的  GPU 性能。</Label></Line>
            </Lines>
          </Note>
        </div>
      </HistoryColumns>
    </Group>
  );
}

function PreferencesDialog() {
  return (
    <DialogFrame>
      <DialogTitle>
        <Label w={34}>首选项</Label>
        <CloseButton>
          <svg width="11" height="10" viewBox="0 0 11 10">
            <path d="M2 1.500L9 8.500M9 1.500L2 8.500" stroke="#5a3a3a" strokeWidth="3.600" />
            <path d="M2 1.500L9 8.500M9 1.500L2 8.500" stroke="#fff" strokeWidth="2.200" />
          </svg>
        </CloseButton>
      </DialogTitle>
      <DialogBody>
        <Categories>
          {categories.map(([t, w]) => (
            <Category key={t} $active={t === "性能"}><Label w={w}>{t}</Label></Category>
          ))}
        </Categories>
        <Groups>
          <GroupRow><MemoryGroup /><GpuGroup /></GroupRow>
          <HistoryGroup />
          <Group $w={481} $h={172}>
            <Legend $ml={12}><Label w={23}>说明</Label></Legend>
            <Lines $pt={5.4} $pl={9}>
              {description.map(([t, w]) => (
                <Line key={t}><Label w={w}>{t}</Label></Line>
              ))}
            </Lines>
          </Group>
        </Groups>
        <ActionColumn>
          <PillButton $primary><Label w={23}>确定</Label></PillButton>
          <PillButton><Label w={23}>取消</Label></PillButton>
          <PillButton><Label w={52}>上一个(<u>P</u>)</Label></PillButton>
          <PillButton><Label w={52}>下一个(<u>N</u>)</Label></PillButton>
        </ActionColumn>
      </DialogBody>
    </DialogFrame>
  );
}

function SiteMark() {
  return (
    <Watermark>
      <WatermarkTop>
        <Label w={60} $size={39} $weight={700}>Bai</Label>
        <svg width="54" height="58" viewBox="827 599 54 58">
          <g fill="#dcdcdc" fillOpacity=".92">
            <ellipse cx="834.500" cy="621" rx="6" ry="8" />
            <ellipse cx="846.800" cy="608.500" rx="6.200" ry="8.500" />
            <ellipse cx="862.500" cy="609.500" rx="6.500" ry="8.500" transform="rotate(12 862.500 609.500)" />
            <ellipse cx="873" cy="625" rx="6.300" ry="8" />
            <path d="M853.500 622.500Q859 622.500 863 629Q866 633 871 638Q877 645 874 650.500Q871 656 863 655Q853.500 653.500 845 655Q836 656 833.500 651Q830 645 836 638Q841 633 844 629Q848 622.500 853.500 622.500z" />
          </g>
          <text x="840.500" y="648.500" textLength="26" lengthAdjust="spacingAndGlyphs" fontFamily="Noto Sans" fontWeight="700" fontSize="22" fill="#555">du</text>
        </svg>
        <Label w={61} $size={31} $weight={700}>经验</Label>
      </WatermarkTop>
      <WatermarkUrl><Label w={176} $size={21} $weight={500}>jingyan.baidu.com</Label></WatermarkUrl>
    </Watermark>
  );
}

export default function App() {
  return (
    <>
      <GlobalStyle />
      <Window>
        <svg width="0" height="0">
          <defs>
            <linearGradient id="grayRamp">
              <stop offset="0" stopColor="#222" />
              <stop offset="1" stopColor="#d8d8d8" />
            </linearGradient>
          </defs>
        </svg>
        <Header />
        <ToolOptions />
        <Workspace>
          <Toolbox />
          <DocumentArea />
          <IconDock>
            <CollapseStrip $end><DoubleArrow flip /></CollapseStrip>
            <IconDockPanel>
              <GripRow $mb={6} />
              <DockIcon>
                <svg width="15" height="16" viewBox="0 0 15 16">
                  <path d="M1 1H5V4.500H1zM1 6H5V9.500H1z" fill="none" stroke={INK} strokeWidth="1.100" />
                  <rect x=".5" y="11" width="5" height="4.500" fill={INK} />
                  <path d="M8 14Q13.500 12 12.300 7.500Q11.800 5.300 9.500 4.500" fill="none" stroke={INK} strokeWidth="1.700" />
                  <path d="M7.500 4.500L12 1.500L11.500 7z" fill={INK} />
                </svg>
              </DockIcon>
            </IconDockPanel>
          </IconDock>
          <Panels>
            <CollapseStrip $end><DoubleArrow /></CollapseStrip>
            <ColorPanel />
            <LibraryPanel />
            <LayersPanel />
          </Panels>
        </Workspace>
        <PreferencesDialog />
        <Highlight $x={195} $y={252} $w={267} $h={165} />
        <Highlight $x={480} $y={279} $w={239} $h={181} />
        <ArrowLayer width="1000" height="706" viewBox="0 0 1000 706">
          <g fill="#fb3d39">
            <path d="M166.500 560L259.500 456.500L255.500 454L273.500 447.300L270 466L265.500 462.500L167.500 561.500z" />
            <path d="M309 571L561 439.500L558.500 435.500L576.500 434.800L566.500 448.500L564 445L310 572.500z" />
          </g>
        </ArrowLayer>
        <SiteMark />
      </Window>
    </>
  );
}
